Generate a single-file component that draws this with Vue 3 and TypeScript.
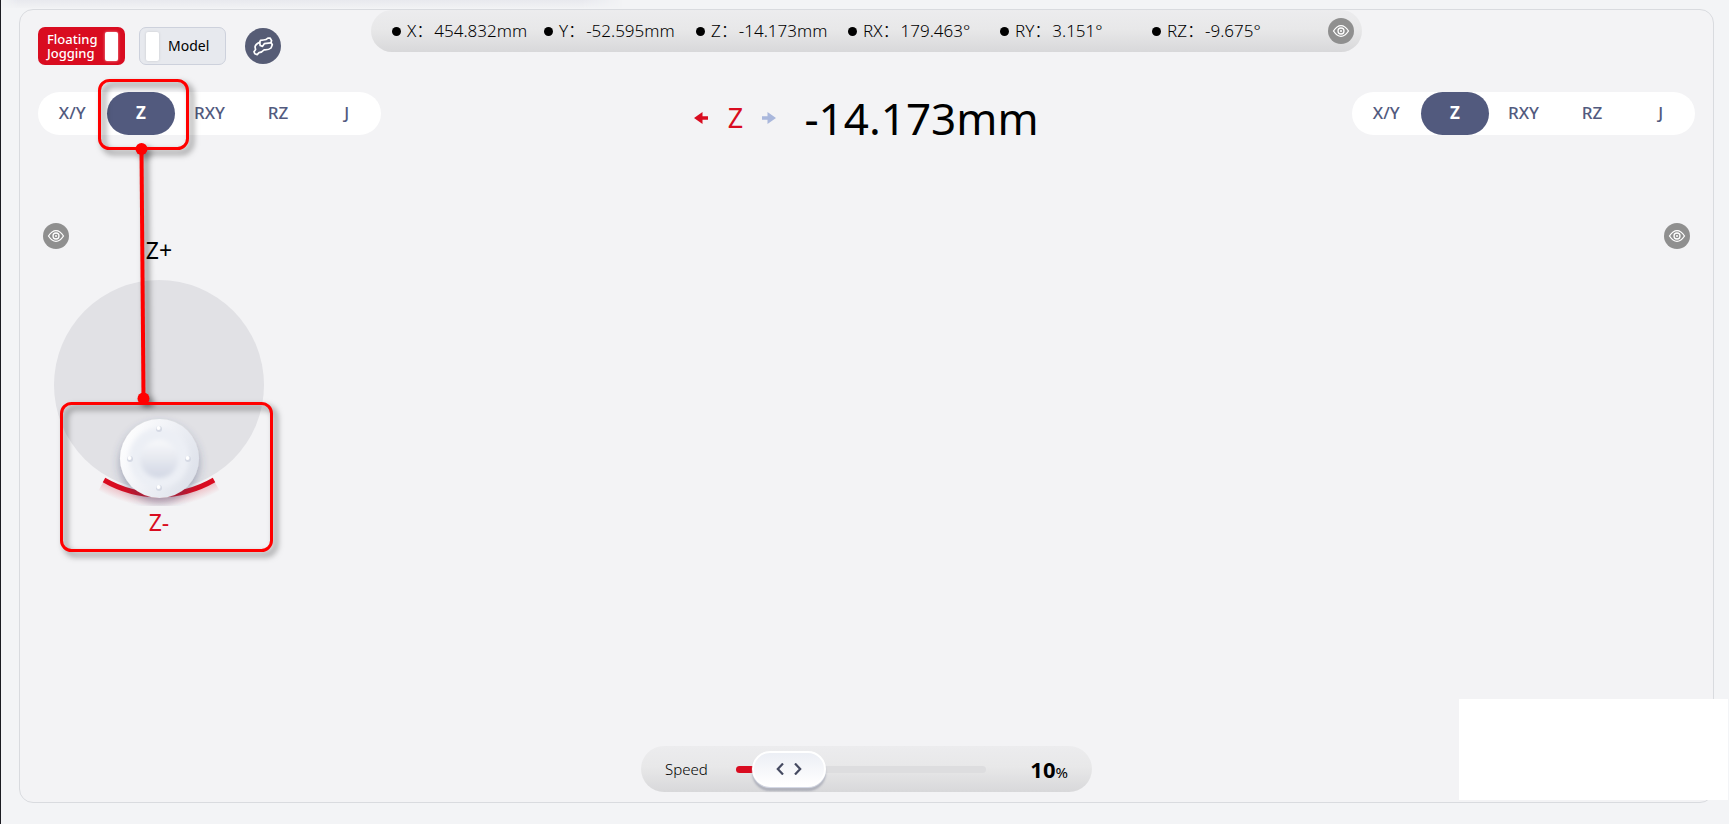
<script setup lang="ts">
import { computed, ref } from 'vue'

interface PoseEntry {
  axis: string
  value: string
}

const pose: PoseEntry[] = [
  { axis: 'X', value: '454.832mm' },
  { axis: 'Y', value: '-52.595mm' },
  { axis: 'Z', value: '-14.173mm' },
  { axis: 'RX', value: '179.463°' },
  { axis: 'RY', value: '3.151°' },
  { axis: 'RZ', value: '-9.675°' },
]

const modes: string[] = ['X/Y', 'Z', 'RXY', 'RZ', 'J']
const leftMode = ref('Z')
const rightMode = ref('Z')
const floating = ref(true)
const model = ref(false)

const minSpeed = 1
const maxSpeed = 100
const speed = ref(10)
const thumbLeft = computed(
  () => `calc((100% - 74px) * ${(speed.value - minSpeed) / (maxSpeed - minSpeed)})`,
)
</script>

<template>
  <main class="page">
    <div class="top-shade"></div>
    <section class="panel">
      <header class="row head">
        <div class="tools">
          <button class="toggle on" type="button" role="switch" :aria-checked="floating" @click="floating = !floating">
            <span class="toggle-text">Floating<br />Jogging</span>
            <span class="toggle-bar"></span>
          </button>
          <button class="toggle off" type="button" role="switch" :aria-checked="model" @click="model = !model">
            <span class="toggle-bar"></span>
            <span class="toggle-text">Model</span>
          </button>
          <button class="round" type="button" aria-label="Robot arm">
            <svg viewBox="0 0 36 36" width="36" height="36" fill="none" stroke="#fff" stroke-width="1.7" stroke-linejoin="round" stroke-linecap="round">
              <path d="M9 23.700 10.600 21.600 10 18.800Q10.500 16 14.700 14.400L15.500 12.300 18.500 12Q21.500 12 23 10L25.200 10.200 26.600 12.600 26 14.500 27.300 16.700 26 20Q24 22 19.200 21.800 17 24.500 14 24.600L12.200 26.600 9.800 25.800Z" />
              <path d="M14.700 14.400 15.200 17.500 17.500 18.400 19.300 15.700 25.600 14.900" />
            </svg>
          </button>
        </div>
        <div class="pose">
          <ul class="pose-list">
            <li v-for="p in pose" :key="p.axis"><i class="dot"></i>{{ p.axis }}：<span class="pose-value">{{ p.value }}</span></li>
          </ul>
          <button class="eye" type="button" aria-label="Toggle pose">
            <svg viewBox="0 0 26 26" width="26" height="26" fill="none" stroke="#fff" stroke-width="1.3">
              <path d="M5.500 13Q9 7.700 13 7.700T20.500 13Q17 18.300 13 18.300T5.500 13Z" />
              <circle cx="13" cy="13" r="3" />
              <circle cx="13" cy="13" r="1" fill="#fff" stroke="none" />
            </svg>
          </button>
        </div>
      </header>

      <div class="row">
        <nav class="tabs" aria-label="Left stick">
          <button v-for="m in modes" :key="m" type="button" :class="{ active: m === leftMode }" @click="leftMode = m">{{ m }}</button>
        </nav>
        <div class="readout">
          <svg class="arrow" viewBox="0 0 14 12" width="14" height="12"><path d="M0 6 8.500 0V4.300H14V7.700H8.500V12Z" fill="#d90c20" /></svg>
          <span class="axis">Z</span>
          <svg class="arrow" viewBox="0 0 14 12" width="14" height="12"><path d="M14 6 5.500 0V4.300H0V7.700H5.500V12Z" fill="#a9b7dc" /></svg>
          <output class="amount">-14.173mm</output>
        </div>
        <nav class="tabs right" aria-label="Right stick">
          <button v-for="m in modes" :key="m" type="button" :class="{ active: m === rightMode }" @click="rightMode = m">{{ m }}</button>
        </nav>
      </div>

      <div class="sticks">
        <div class="stick-side">
          <button class="eye" type="button" aria-label="Toggle left stick">
            <svg viewBox="0 0 26 26" width="26" height="26" fill="none" stroke="#fff" stroke-width="1.3">
              <path d="M5.500 13Q9 7.700 13 7.700T20.500 13Q17 18.300 13 18.300T5.500 13Z" />
              <circle cx="13" cy="13" r="3" />
              <circle cx="13" cy="13" r="1" fill="#fff" stroke="none" />
            </svg>
          </button>
          <div class="stick">
            <span class="stick-label">Z+</span>
            <svg class="joystick" viewBox="0 0 240 226" width="240" height="226">
              <defs>
                <linearGradient id="rim" x1="0" y1="0.2" x2="1" y2="0.7">
                  <stop offset="0" stop-color="#ffffff" />
                  <stop offset="0.5" stop-color="#eff1f6" />
                  <stop offset="1" stop-color="#dde1ea" />
                </linearGradient>
                <linearGradient id="dish" x1="0" y1="0" x2="0" y2="1">
                  <stop offset="0" stop-color="#f8f9fb" />
                  <stop offset="1" stop-color="#d2d7e4" />
                </linearGradient>
                <radialGradient id="glow" gradientUnits="userSpaceOnUse" cx="120" cy="105" r="122">
                  <stop offset="0.9" stop-color="#d90c20" stop-opacity="0.25" />
                  <stop offset="1" stop-color="#d90c20" stop-opacity="0" />
                </radialGradient>
                <filter id="soft" x="-20%" y="-20%" width="140%" height="140%"><feGaussianBlur stdDeviation="2" /></filter>
                <filter id="drop" x="-30%" y="-30%" width="160%" height="170%">
                  <feDropShadow dx="0" dy="5" stdDeviation="5" flood-color="#3a4270" flood-opacity="0.4" />
                </filter>
              </defs>
              <circle cx="120" cy="105" r="105" fill="#e1e1e5" />
              <path d="M62 206A116 116 0 0 0 178 206" fill="none" stroke="url(#glow)" stroke-width="11" />
              <path d="M65 200A110 110 0 0 0 175 200" fill="none" stroke="#d90c20" stroke-width="5" />
              <circle cx="120.500" cy="178.500" r="39.500" fill="url(#rim)" filter="url(#drop)" />
              <circle cx="120" cy="178" r="30" fill="#eceff5" filter="url(#soft)" />
              <circle cx="120" cy="179" r="19" fill="url(#dish)" filter="url(#soft)" />
              <g fill="#d5d9e4">
                <circle cx="120" cy="149" r="3" />
                <circle cx="120" cy="208" r="3" />
                <circle cx="91" cy="179" r="3" />
                <circle cx="149" cy="179" r="3" />
              </g>
              <g fill="#fff">
                <circle cx="119.500" cy="148" r="2" />
                <circle cx="119.500" cy="207" r="2" />
                <circle cx="90.500" cy="178" r="2" />
                <circle cx="148.500" cy="178" r="2" />
              </g>
            </svg>
            <span class="stick-label minus">Z-</span>
          </div>
        </div>
        <button class="eye" type="button" aria-label="Toggle right stick">
          <svg viewBox="0 0 26 26" width="26" height="26" fill="none" stroke="#fff" stroke-width="1.3">
            <path d="M5.500 13Q9 7.700 13 7.700T20.500 13Q17 18.300 13 18.300T5.500 13Z" />
            <circle cx="13" cy="13" r="3" />
            <circle cx="13" cy="13" r="1" fill="#fff" stroke="none" />
          </svg>
        </button>
      </div>

      <footer class="speed">
        <label for="speed">Speed</label>
        <div class="slider">
          <div class="track"><div class="fill" :style="{ width: thumbLeft }"></div></div>
          <div class="thumb" :style="{ left: thumbLeft }">
            <svg viewBox="0 0 26 12" width="26" height="12" fill="none" stroke="#454a61" stroke-width="2.2">
              <path d="M7 .5 1.800 6 7 11.500M19 .5 24.200 6 19 11.500" />
            </svg>
          </div>
          <input id="speed" v-model.number="speed" type="range" :min="minSpeed" :max="maxSpeed" />
        </div>
        <output class="percent" for="speed"><b>{{ speed }}</b>%</output>
      </footer>
    </section>

    <div class="blank"></div>

    <svg class="callout" width="300" height="580" viewBox="0 0 300 580" fill="none" stroke="#ff0000" stroke-width="3" aria-hidden="true">
      <rect x="99.500" y="80.500" width="88" height="68" rx="10" />
      <path d="M141.500 149 143.500 398" stroke-width="4" />
      <rect x="61.500" y="403.500" width="210" height="147" rx="10" />
      <circle cx="141.500" cy="149" r="6" fill="#ff0000" stroke="none" />
      <circle cx="143.500" cy="398.500" r="6" fill="#ff0000" stroke="none" />
    </svg>
  </main>
</template>

<style>
body {
  background: #f3f4f6;
}
</style>

<style scoped>
.page {
  position: relative;
  box-sizing: border-box;
  min-height: 100vh;
  display: flex;
  padding: 9px 15px 21px 18px;
  border-left: 1px solid #1c1c22;
  background: #f3f4f6;
  color: #000;
  font-family: "Segoe UI", "Noto Sans", "Noto Sans CJK SC", sans-serif;
  overflow: hidden;
}
.top-shade {
  position: absolute;
  top: 0;
  left: 0;
  width: 36%;
  height: 8px;
  background: linear-gradient(#e8e9ee, #f1f2f4);
  mask-image: linear-gradient(to right, transparent, #000 16px, #000 calc(100% - 40px), transparent);
}
.panel {
  flex: 1;
  display: flex;
  flex-direction: column;
  border: 1px solid #d9dbdf;
  border-radius: 14px;
  background: #f3f3f5;
}
button {
  padding: 0;
  border: 0;
  font: inherit;
  cursor: pointer;
}
.row {
  display: grid;
  grid-template-columns: 1fr auto 1fr;
  align-items: start;
  padding: 0 18px;
}
.head {
  margin-bottom: 27px;
}
.tools {
  display: flex;
  align-items: center;
  padding-top: 17px;
}
.toggle {
  display: flex;
  align-items: center;
  box-sizing: border-box;
  width: 87px;
  height: 38px;
  border-radius: 7px;
  font-size: 14px;
  line-height: 14px;
  text-align: left;
}
.toggle-bar {
  width: 13px;
  height: 29px;
  border-radius: 2px;
  background: #fff;
}
.on {
  justify-content: space-between;
  padding: 0 7px 0 9px;
  background: #d90c20;
  color: #fff;
  font-size: 13px;
  font-weight: 500;
}
.on .toggle-bar {
  box-shadow: 0 0 3px #ffffff99;
}
.off {
  gap: 9px;
  margin-left: 14px;
  padding-left: 6px;
  border: 1px solid #cdd1dc;
  background: #e7e9ee;
  color: #000;
}
.off .toggle-bar {
  box-shadow: 0 0 3px #00000022;
}
.round {
  width: 36px;
  height: 36px;
  margin-left: 19px;
  border-radius: 50%;
  background: #565c75;
}
.round svg,
.eye svg {
  display: block;
}
.pose {
  display: flex;
  align-items: center;
  justify-content: space-between;
  box-sizing: border-box;
  width: 991px;
  height: 42px;
  padding: 0 8px 0 21px;
  border-radius: 21px;
  background: linear-gradient(#ececee, #e8e8e9 45%, #d8d8da);
}
.pose-list {
  display: grid;
  grid-template-columns: repeat(6, 152px);
  margin: 0;
  padding: 0;
  list-style: none;
  font-size: 17px;
  line-height: 24px;
  font-weight: 300;
  white-space: nowrap;
}
.pose-list li {
  display: flex;
  align-items: center;
}
.pose-value {
  margin-left: 1px;
}
.dot {
  width: 9px;
  height: 9px;
  margin-right: 6px;
  border-radius: 50%;
  background: #000;
}
.eye {
  width: 26px;
  height: 26px;
  border-radius: 50%;
  background: #8f8f8f;
}
.tabs {
  display: grid;
  grid-template-columns: repeat(5, 1fr);
  width: 343px;
  height: 43px;
  border-radius: 22px;
  background: #fff;
}
.tabs.right {
  justify-self: end;
}
.tabs button {
  padding-bottom: 2px;
  border-radius: 22px;
  background: transparent;
  color: #525a7e;
  font-size: 17px;
  font-weight: 500;
}
.tabs .active {
  background: #525a7e;
  color: #fff;
  font-weight: 700;
}
.readout {
  display: flex;
  align-items: center;
  height: 52px;
}
.axis {
  width: 54px;
  color: #d90c20;
  font-size: 27px;
  line-height: 50px;
  text-align: center;
}
.amount {
  margin-left: 28px;
  font-size: 44px;
  line-height: 50px;
}
.sticks {
  flex: 1;
  display: flex;
  align-items: flex-start;
  justify-content: space-between;
  padding: 79px 23px 0;
}
.stick-side {
  display: flex;
  flex-direction: column;
}
.stick {
  display: flex;
  flex-direction: column;
  align-items: center;
  margin: -15px 0 0 -4px;
}
.stick-label {
  font-size: 23px;
  line-height: 32px;
}
.stick-label.minus {
  color: #d90c20;
}
.stick-label + .joystick {
  margin-top: 14px;
}
.speed {
  align-self: center;
  display: flex;
  align-items: center;
  box-sizing: border-box;
  width: 451px;
  height: 46px;
  margin-bottom: 10px;
  padding: 0 24px;
  border-radius: 23px;
  background: linear-gradient(#ececee, #e8e8e9 45%, #d8d8da);
}
.speed label {
  width: 71px;
  font-size: 15px;
  font-weight: 300;
}
.slider {
  position: relative;
  display: flex;
  align-items: center;
  width: 250px;
  height: 36px;
}
.track {
  flex: 1;
  height: 7px;
  border-radius: 4px;
  background: #dddddf;
}
.fill {
  box-sizing: content-box;
  height: 7px;
  padding-right: 12px;
  border-radius: 4px;
  background: #d90c20;
}
.thumb {
  position: absolute;
  top: 0;
  display: grid;
  place-items: center;
  box-sizing: border-box;
  width: 74px;
  height: 36px;
  border: 2px solid #fff;
  border-radius: 18px;
  background: linear-gradient(#eceff5, #fff);
  box-shadow: 0 1px 1px #d9ddea, 0 4px 2px #7d809477;
}
.slider input {
  position: absolute;
  inset: 0;
  width: 100%;
  margin: 0;
  opacity: 0;
}
.percent {
  flex: 1;
  font-size: 15px;
  text-align: right;
}
.percent b {
  font-size: 22px;
}
.blank {
  position: absolute;
  right: 1px;
  bottom: 24px;
  width: 269px;
  height: 101px;
  background: #fff;
}
.callout {
  position: absolute;
  top: 0;
  left: -1px;
  filter: drop-shadow(4px 4px 3px #00000088);
  pointer-events: none;
}
</style>
